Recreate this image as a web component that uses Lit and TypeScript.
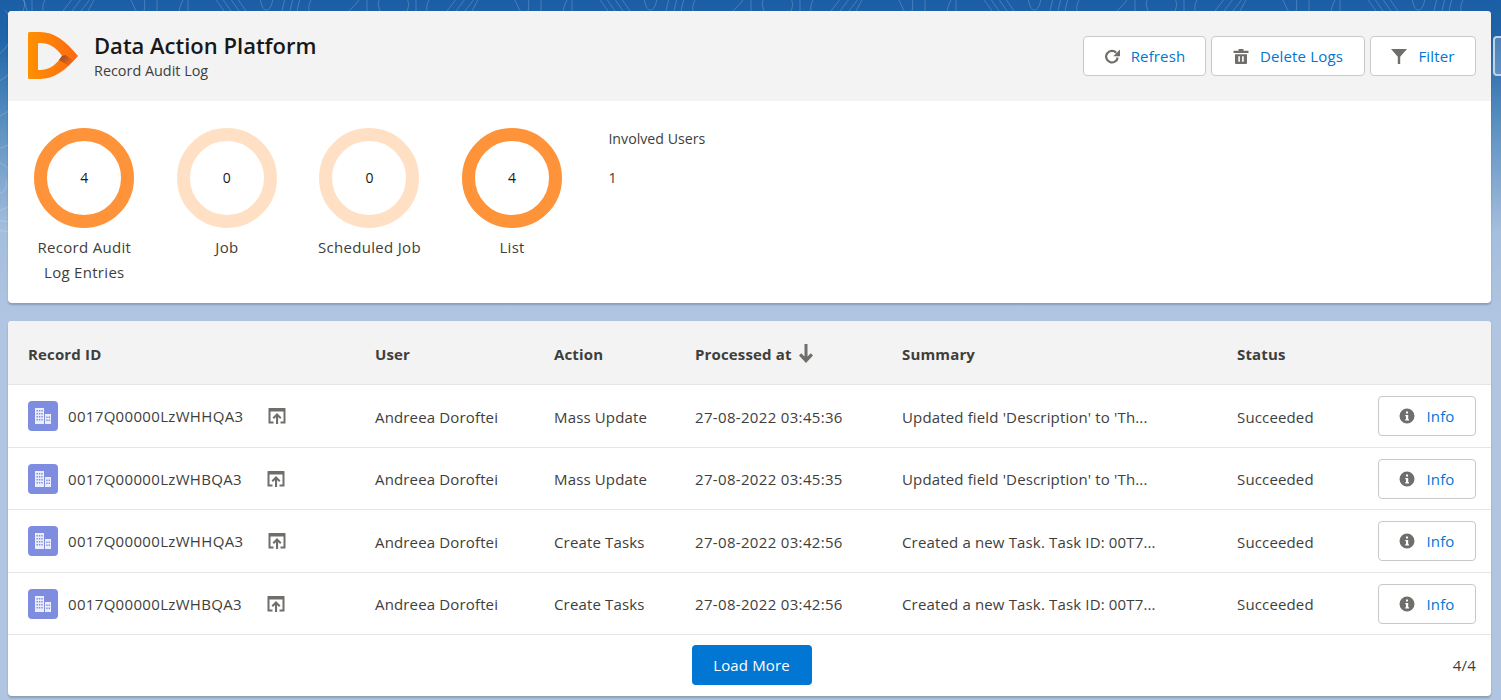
import { LitElement, html, css, svg } from "lit";
import { customElement } from "lit/decorators.js";

const stats = [
  { value: 4, label: "Record Audit Log Entries", on: true },
  { value: 0, label: "Job", on: false },
  { value: 0, label: "Scheduled Job", on: false },
  { value: 4, label: "List", on: true },
];

const rows = [
  ["0017Q00000LzWHHQA3", "Mass Update", "27-08-2022 03:45:36", "Updated field 'Description' to 'Th..."],
  ["0017Q00000LzWHBQA3", "Mass Update", "27-08-2022 03:45:35", "Updated field 'Description' to 'Th..."],
  ["0017Q00000LzWHHQA3", "Create Tasks", "27-08-2022 03:42:56", "Created a new Task. Task ID: 00T7..."],
  ["0017Q00000LzWHBQA3", "Create Tasks", "27-08-2022 03:42:56", "Created a new Task. Task ID: 00T7..."],
];

const refreshIcon = svg`<path d="M12.200 4.700A5.800 5.800 0 1 0 13.700 9.500" fill="none" stroke="currentColor" stroke-width="2.200"/><path d="M16 1.500v6.700H9.300z" fill="currentColor"/>`;
const trashIcon = svg`<path d="M5.500 1h5v1.700h5v2.300H.5V2.700h5zM2 6.300h12V15a1 1 0 0 1-1 1H3a1 1 0 0 1-1-1zm3.300 2v5.500h1.600V8.300zm3.800 0v5.500h1.600V8.300z" fill="currentColor" fill-rule="evenodd"/>`;
const filterIcon = svg`<path d="M0 1h16L9.200 8.800V16H6.800V8.800z" fill="currentColor"/>`;
const infoIcon = svg`<path d="M8 .5a7.500 7.500 0 1 0 0 15 7.500 7.500 0 0 0 0-15zM7 3.500h2v2H7zM6.300 7h2.900v4.300h.8v1.300H6.200v-1.300H7V8.300h-.7z" fill="currentColor" fill-rule="evenodd"/>`;

// faint contour lines of the page background: the top band repeats every 384px
const band = [
  "M49 11C54 6 58 2 60 -2",
  "M67 11V-2",
  "M80 11C76 2 80 -2 82 -2M107 11C110 4 108 0 106 -2",
  "M116 11V-2",
  "M127 11C126 6 128 2 130 -2",
  "M147 11L157 -2M156 11L166 -2M165 11L175 -2M172 11L179 -2",
  "M214 -2L220 11",
  "M228 -2C229 3 229 7 228 11",
  "M241 -2V11",
  "M263 11C264 6 266 2 268 -2",
  "M272 11V-2",
  "M299 -2L308 11M306 -2L315 11M314 -2L323 11M321 -2L330 11",
  "M344 -2C346 14 355 14 357 -2",
  "M366 11L369 -2M374 11L377 -2M381 11L384 -2",
  "M393 11C392 6 394 2 396 -2",
];
const left = [
  "M-10 60C10 50 20 30 5 10",
  "M-10 86C25 70 40 40 22 -5",
  "M-5 118C10 112 20 104 24 92",
  "M-5 150C8 146 18 140 24 132",
  "M-5 160C12 168 20 180 16 196C12 206 4 210 -5 212",
  "M-5 192C2 196 8 190 6 180",
  "M-5 220C6 222 16 222 24 220",
  "M-5 230C6 232 16 232 24 230",
];
const offsets = [-84, 300, 684, 1068, 1452];

@customElement("app-root")
export class AppRoot extends LitElement {
  static styles = css`
    :host {
      display: block;
      height: 700px;
      overflow: hidden;
      font-family: "Open Sans", "Noto Sans", sans-serif;
      font-size: 15px;
      letter-spacing: 0.15px;
      color: #3e3e3c;
      background: linear-gradient(180deg, #1b5ea5 0, #1f65a9 40px, #5f93c3 130px, #a4bedd 230px, #b0c5e1 320px, #b0c5e1 100%);
    }
    .page {
      position: relative;
      display: flex;
      flex-direction: column;
      gap: 18px;
      padding: 11px 10px 0 8px;
    }
    .topo {
      position: absolute;
      inset: 0 0 auto 0;
      width: 1501px;
      height: 340px;
    }
    .peek {
      position: absolute;
      left: 1493px;
      top: 36px;
      box-sizing: border-box;
      width: 40px;
      height: 40px;
      border: 2px solid #c3d2e0;
      border-radius: 4px;
      background: rgba(255, 255, 255, 0.2);
    }
    .card {
      position: relative;
      background: #fff;
      border-radius: 4px;
      box-shadow: 0 2px 2px rgba(0, 0, 0, 0.2);
      overflow: hidden;
    }
    .head {
      display: flex;
      align-items: center;
      height: 90px;
      padding: 0 15px 0 20px;
      background: #f3f3f3;
    }
    .logo {
      width: 50px;
      height: 47px;
      margin-right: 16px;
      margin-top: -2px;
    }
    .titles {
      flex: 1;
      margin-top: 2px;
    }
    h1 {
      margin: 0;
      font-size: 22px;
      letter-spacing: 0;
      line-height: 27px;
      font-weight: 600;
      color: #181818;
    }
    .sub {
      font-size: 14.4px;
      letter-spacing: 0;
      line-height: 23px;
      color: #3e3e3c;
    }
    .actions {
      display: flex;
      gap: 5px;
      margin-top: -1px;
    }
    .btn {
      display: inline-flex;
      align-items: center;
      justify-content: center;
      gap: 11px;
      box-sizing: border-box;
      height: 40px;
      border: 1px solid #c9c9c9;
      border-radius: 4px;
      background: #fff;
      color: #0176d3;
      font: inherit;
      letter-spacing: inherit;
      padding: 0;
    }
    .btn svg {
      width: 16px;
      height: 16px;
      color: #706e6b;
    }
    .refresh {
      width: 123px;
    }
    .delete {
      width: 154px;
    }
    .filter {
      width: 106px;
    }
    .stats {
      display: flex;
      height: 202px;
      padding: 27px 0 0 15px;
      box-sizing: border-box;
      gap: 20px;
    }
    .stat {
      display: flex;
      flex-direction: column;
      align-items: center;
      width: 122.6px;
      text-align: center;
      line-height: 25px;
    }
    .label {
      max-width: 112px;
      letter-spacing: 0.3px;
    }
    .ring {
      display: flex;
      align-items: center;
      justify-content: center;
      box-sizing: border-box;
      width: 100px;
      height: 100px;
      margin-bottom: 7px;
      padding-bottom: 2px;
      border: 13px solid #fe9339;
      border-radius: 50%;
      font-size: 14px;
      color: #181818;
    }
    .ring.off {
      border-color: #ffe0c4;
    }
    .users {
      margin-left: 15px;
      padding-top: 1px;
      font-size: 14.2px;
      letter-spacing: 0;
      line-height: 20px;
    }
    .users div:last-child {
      margin-top: 19px;
    }
    .grid {
      display: grid;
      grid-template-columns: 347px 179px 141px 207px 335px 1fr;
    }
    .thead {
      display: grid;
      grid-template-columns: inherit;
      grid-column: 1 / -1;
      align-items: center;
      height: 64.3px;
      padding: 2px 0 0 20px;
      box-sizing: border-box;
      background: #f3f3f3;
      border-bottom: 1px solid #e5e5e5;
      font-weight: 700;
      color: #3e3e3c;
    }
    .sort {
      display: flex;
      align-items: center;
      gap: 7px;
    }
    .sort svg {
      width: 14px;
      height: 19px;
      color: #706e6b;
    }
    .row {
      display: grid;
      grid-template-columns: inherit;
      grid-column: 1 / -1;
      align-items: center;
      height: 62.5px;
      padding-left: 20px;
      box-sizing: border-box;
      border-bottom: 1px solid #e5e5e5;
    }
    .txt {
      padding-top: 1px;
    }
    .rec {
      display: flex;
      align-items: center;
    }
    .num {
      letter-spacing: 0.33px;
    }
    .badge {
      display: flex;
      align-items: center;
      justify-content: center;
      width: 30px;
      height: 30px;
      margin-right: 10px;
      border-radius: 4px;
      background: #7f8de1;
    }
    .badge svg {
      width: 20px;
      height: 20px;
    }
    .open {
      width: 18px;
      height: 18px;
      margin-left: 25px;
      color: #706e6b;
    }
    .last {
      display: flex;
      justify-content: space-between;
      align-items: center;
      padding-right: 15px;
    }
    .info {
      width: 98px;
    }
    .foot {
      position: relative;
      display: flex;
      justify-content: center;
      align-items: flex-start;
      box-sizing: border-box;
      height: 61px;
      padding: 10px 0 0 4px;
    }
    .load {
      width: 120px;
      height: 40px;
      border: 0;
      border-radius: 4px;
      background: #0176d3;
      color: #fff;
      font: inherit;
      letter-spacing: inherit;
    }
    .count {
      position: absolute;
      right: 15px;
      top: 20px;
      letter-spacing: 0.2px;
    }
  `;

  render() {
    return html`
      <div class="page">
        <svg class="topo" viewBox="0 0 1501 340" fill="none" stroke="rgba(255,255,255,0.2)">
          ${left.map((d) => svg`<path d=${d}/>`)}
          ${offsets.map(
            (x) => svg`<g transform="translate(${x} 0)">${band.map((d) => svg`<path d=${d}/>`)}</g>`
          )}
        </svg>
        <div class="peek"></div>
        <section class="card">
          <header class="head">
            <svg class="logo" viewBox="0 0 50 47">
              <defs>
                <linearGradient id="lg" x1="0" x2="1" y1="0" y2="0">
                  <stop offset="0" stop-color="#ff9000"/>
                  <stop offset="1" stop-color="#fb6a14"/>
                </linearGradient>
                <linearGradient id="sh" x1="0" x2="1" y1="0" y2="0.7">
                  <stop offset="0" stop-color="#8f4a24"/>
                  <stop offset="1" stop-color="#f76c16"/>
                </linearGradient>
              </defs>
              <path d="M1.500 0H12C26 0 37 8 50 24 38 38 26 47 12 47H1.500A1.500 1.500 0 0 1 0 45.500V1.500A1.500 1.500 0 0 1 1.500 0zM10 11V38H12C21 38 28 33 34 24 28 15 21 11 12 11z" fill="url(#lg)" fill-rule="evenodd"/>
              <path d="M34 24 37.500 23 45 28.500 40.500 33.500 31 28z" fill="url(#sh)"/>
            </svg>
            <div class="titles">
              <h1>Data Action Platform</h1>
              <div class="sub">Record Audit Log</div>
            </div>
            <div class="actions">
              <button class="btn refresh"><svg viewBox="0 0 16 16">${refreshIcon}</svg>Refresh</button>
              <button class="btn delete"><svg viewBox="0 0 16 16">${trashIcon}</svg>Delete Logs</button>
              <button class="btn filter"><svg viewBox="0 0 16 16">${filterIcon}</svg>Filter</button>
            </div>
          </header>
          <div class="stats">
            ${stats.map(
              (s) => html`
                <div class="stat">
                  <div class="ring ${s.on ? "" : "off"}">${s.value}</div>
                  <div class="label">${s.label}</div>
                </div>
              `
            )}
            <div class="users">
              <div>Involved Users</div>
              <div>1</div>
            </div>
          </div>
        </section>
        <section class="card">
          <div class="grid">
            <div class="thead">
              <div>Record ID</div>
              <div>User</div>
              <div>Action</div>
              <div class="sort">
                Processed at
                <svg viewBox="0 0 14 19"><path d="M5.500 0h3v12.500l3.300-3.300L14 11.400 7 19 0 11.400l2.200-2.200 3.300 3.300z" fill="currentColor"/></svg>
              </div>
              <div>Summary</div>
              <div>Status</div>
            </div>
            ${rows.map(
              (r) => html`
                <div class="row">
                  <div class="rec">
                    <span class="badge">
                      <svg viewBox="0 0 20 20" fill="#fff" fill-opacity="0.85">
                        <path fill-rule="evenodd" d="M2 2h9v16H2zM3.500 4v1.500h1.400V4zm2.400 0v1.500h1.400V4zm2.400 0v1.500h1.400V4zM3.500 7v1.500h1.400V7zm2.400 0v1.500h1.400V7zm2.400 0v1.500h1.400V7zM3.500 10v1.500h1.400V10zm2.400 0v1.500h1.400V10zm2.400 0v1.500h1.400V10zM3.500 13v1.500h1.400V13zm2.400 0v1.500h1.400V13zm2.400 0v1.500h1.400V13z"/>
                        <path fill-rule="evenodd" d="M12 8h6v10h-6zm1.200 2.500V12h1.400v-1.500zm2.400 0V12H17v-1.500zm-2.400 3V15h1.400v-1.500zm2.400 0V15H17v-1.500z"/>
                      </svg>
                    </span>
                    <span class="num">${r[0]}</span>
                    <svg class="open" viewBox="0 0 18 18">
                      <path fill="currentColor" fill-rule="evenodd" d="M1 1h16a.5.5 0 0 1 .5.5V16a.5.5 0 0 1-.5.5h-4.500v-2H15.500V4.500h-13v10H5.500v2H1a.5.500 0 0 1-.5-.5V1.500A.5.500 0 0 1 1 1z"/>
                      <path fill="currentColor" d="M9 6l4.500 4.500-1.400 1.400-2-2V17H8V9.900l-2 2-1.500-1.400z"/>
                    </svg>
                  </div>
                  <div class="txt">Andreea Doroftei</div>
                  <div class="txt">${r[1]}</div>
                  <div class="txt num">${r[2]}</div>
                  <div class="txt">${r[3]}</div>
                  <div class="last">
                    <span class="txt">Succeeded</span>
                    <button class="btn info"><svg viewBox="0 0 16 16">${infoIcon}</svg>Info</button>
                  </div>
                </div>
              `
            )}
          </div>
          <div class="foot">
            <button class="load">Load More</button>
            <span class="count">4/4</span>
          </div>
        </section>
      </div>
    `;
  }
}
